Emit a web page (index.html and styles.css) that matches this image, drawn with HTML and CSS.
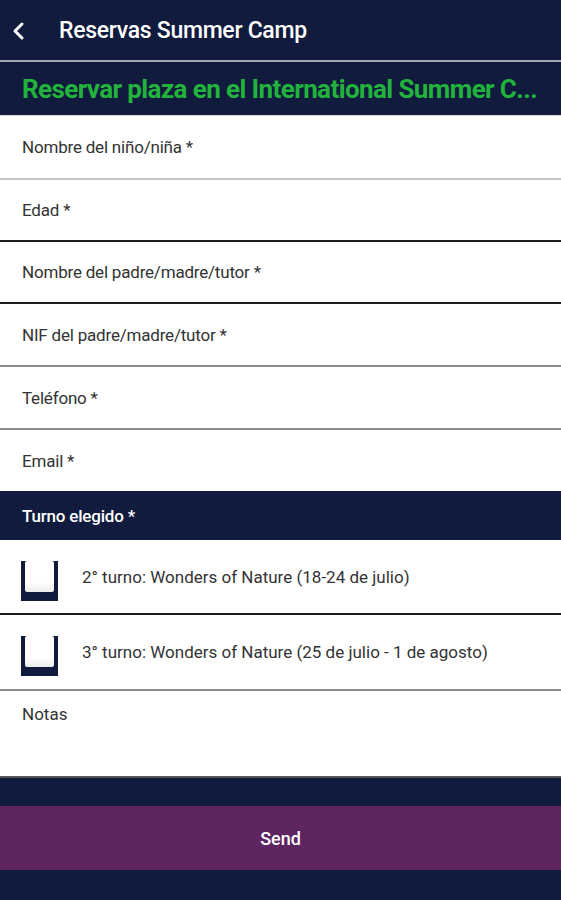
FILE: index.html
```html
<!DOCTYPE html>
<html lang="es">
<head>
    <meta charset="UTF-8">
    <meta name="viewport" content="width=device-width, initial-scale=1.0">
    <title>Reservas Summer Camp</title>
    <link rel="stylesheet" href="styles.css">
</head>
<body>
    <!-- Top app bar -->
    <header class="appbar">
        <svg class="back-icon" width="20" height="20" viewBox="0 0 20 20">
            <path d="M13 3 L6 10 L13 17" fill="none" stroke="#fff" stroke-width="3" stroke-linecap="round" stroke-linejoin="round"/>
        </svg>
        <span class="appbar-title">Reservas Summer Camp</span>
    </header>

    <!-- Form heading -->
    <div class="subbar">Reservar plaza en el International Summer C...</div>

    <!-- Text fields -->
    <div class="field field-first border-light">Nombre del niño/niña *</div>
    <div class="field border-dark">Edad *</div>
    <div class="field border-dark">Nombre del padre/madre/tutor *</div>
    <div class="field field-tall border-gray">NIF del padre/madre/tutor *</div>
    <div class="field field-tall border-gray">Teléfono *</div>
    <div class="field field-last">Email *</div>

    <!-- Shift choice -->
    <div class="section-title">Turno elegido *</div>
    <div class="option border-dark">
        <span class="checkbox"></span>
        <span class="option-label">2° turno: Wonders of Nature (18-24 de julio)</span>
    </div>
    <div class="option border-gray">
        <span class="checkbox"></span>
        <span class="option-label">3° turno: Wonders of Nature (25 de julio - 1 de agosto)</span>
    </div>

    <!-- Notes -->
    <div class="notes">Notas</div>

    <div class="spacer"></div>
    <button class="send-btn">Send</button>
</body>
</html>
```

FILE: styles.css
```css
* {
    margin: 0;
    padding: 0;
    box-sizing: border-box;
}

body {
    font-family: Roboto, "Noto Sans", sans-serif;
    background: #111b3e;
    width: 561px;
    min-height: 900px;
}

/* App bar */
.appbar {
    height: 60px;
    display: flex;
    align-items: center;
    padding-left: 9px;
}

.back-icon {
    margin-top: 1px;
}

.appbar-title {
    margin-left: 30px;
    color: #fff;
    font-size: 23px;
    font-weight: 500;
    letter-spacing: -0.3px;
}

/* Green heading */
.subbar {
    height: 56px;
    border-top: 2px solid #a3a8b6;
    border-bottom: 1px solid #d8d8d8;
    padding: 0 22px;
    display: flex;
    align-items: center;
    color: #22b33c;
    font-size: 26px;
    font-weight: 700;
    letter-spacing: -0.6px;
    white-space: nowrap;
    overflow: hidden;
}

/* Fields */
.field {
    background: #fff;
    height: 62px;
    padding: 0 22px;
    display: flex;
    align-items: center;
    color: #333;
    font-size: 17px;
    letter-spacing: -0.2px;
}

.field-first {
    height: 64px;
}

.field-tall {
    height: 63px;
}

.field-last {
    height: 61px;
}

.border-light {
    border-bottom: 2px solid #c6c6c6;
}

.border-dark {
    border-bottom: 2px solid #1c1c1c;
}

.border-gray {
    border-bottom: 2px solid #8c8c8c;
}

.section-title {
    height: 49px;
    padding: 0 22px;
    display: flex;
    align-items: center;
    color: #fff;
    font-size: 17px;
    font-weight: 500;
    letter-spacing: -0.2px;
}

/* Checkbox rows */
.option {
    background: #fff;
    height: 75px;
    display: flex;
    align-items: center;
    padding: 8px 0 0 21px;
    gap: 24px;
    color: #333;
    font-size: 17px;
}

.option + .option {
    height: 76px;
}

.option-label {
    margin-top: -8px;
}

.checkbox {
    width: 37px;
    height: 40px;
    background: #111b3e;
    padding: 0 4px 9px 4px;
    flex-shrink: 0;
}

.checkbox::before {
    content: "";
    display: block;
    width: 100%;
    height: 100%;
    background: linear-gradient(#fff 70%, #ececec);
    border-radius: 2px;
}

.notes {
    background: #fff;
    height: 87px;
    padding: 13px 22px 0;
    color: #333;
    font-size: 17px;
    border-bottom: 2px solid #555;
}

.spacer {
    height: 28px;
}

.send-btn {
    display: block;
    width: 100%;
    height: 64px;
    border: none;
    background: #5e2560;
    color: #fff;
    font-family: Roboto, sans-serif;
    font-size: 18px;
    font-weight: 500;
}
```
